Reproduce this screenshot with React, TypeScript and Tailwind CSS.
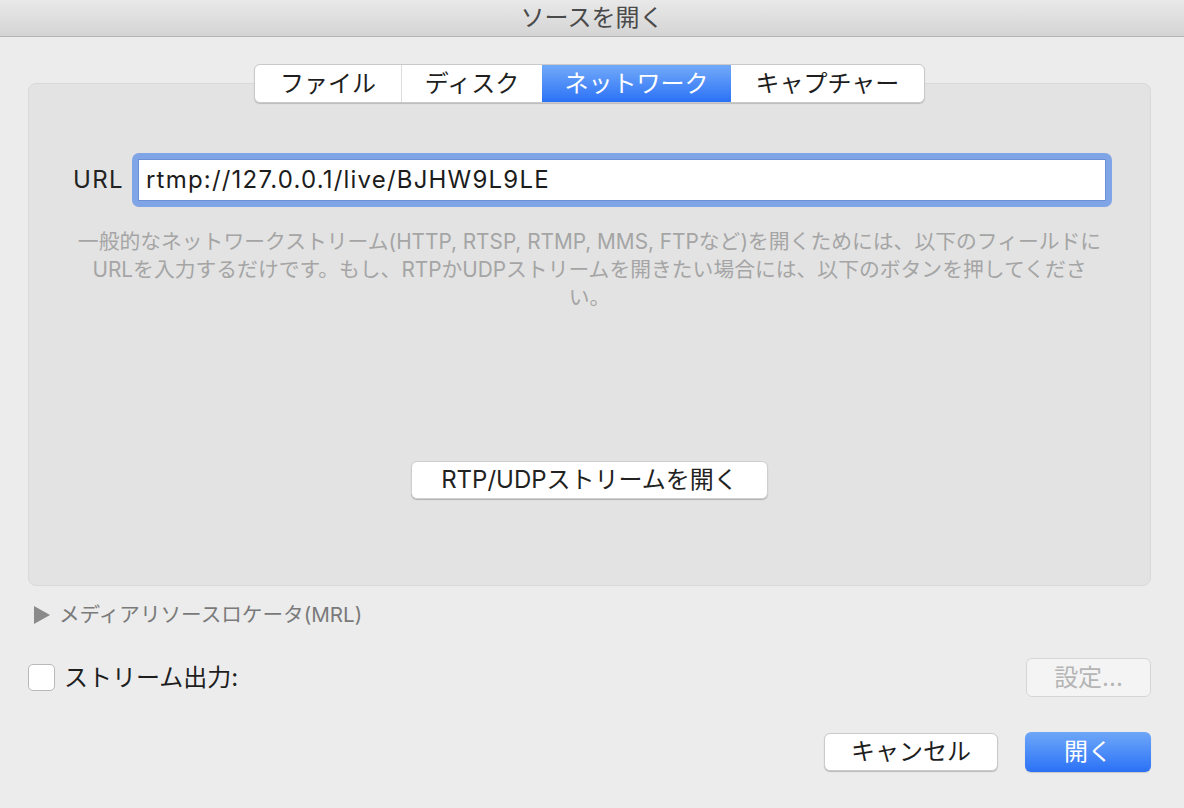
import React from "react";

const FONT = { fontFamily: '"Inter", "Noto Sans CJK JP", sans-serif' };

function Segmented() {
  const items = ["ファイル", "ディスク", "ネットワーク", "キャプチャー"];
  const widths = ["w-[146px]", "w-[141px]", "w-[189px]", "w-[193px]"];
  return (
    <div className="relative z-10 flex h-[39px] rounded-[6px] border border-[#c9c9c9] bg-white shadow-[0_1px_1px_rgba(0,0,0,0.18)] overflow-hidden">
      {items.map((t, i) => {
        const sel = i === 2;
        return (
          <div
            key={t}
            className={
              "flex items-center justify-center text-[24px] leading-none " +
              widths[i] +
              (sel
                ? " bg-gradient-to-b from-[#72a9f8] to-[#2b71f6] text-white"
                : " text-[#1e1e1e]") +
              (i === 1 ? " border-l border-[#dcdcdc]" : "")
            }
          >
            {t}
          </div>
        );
      })}
    </div>
  );
}

export default function App() {
  return (
    <div
      className="w-[1184px] h-[808px] bg-[#ececec] flex flex-col overflow-hidden"
      style={FONT}
    >
      {/* title bar */}
      <div className="h-[37px] shrink-0 bg-gradient-to-b from-[#e9e9e9] to-[#d4d4d4] border-b border-[#b4b4b4] flex items-center justify-center">
        <span className="text-[24px] leading-none text-[#4a4a4a]">ソースを開く</span>
      </div>

      <div className="pl-[28px] pr-[33px] flex flex-col">
        {/* tabs */}
        <div className="pt-[27px] flex justify-center">
          <Segmented />
        </div>

        {/* panel */}
        <div className="-mt-[20px] h-[503px] rounded-[8px] bg-[#e3e3e3] border border-[#d9d9d9] flex flex-col items-center">
          <div className="mt-[69px] w-full flex items-center pl-[44px]">
            <span className="text-[24px] leading-none tracking-[1.3px] text-[#222] w-[59px]">URL</span>
            <div className="w-[980px] h-[54px] rounded-[7px] bg-[#80a5e6] p-[6px]">
              <div className="h-full bg-white border border-[#6d8fd4] flex items-center pl-[7px]">
                <span className="text-[24px] leading-none tracking-[1.2px] text-[#1c1c1c]">
                  rtmp://127.0.0.1/live/BJHW9L9LE
                </span>
              </div>
            </div>
          </div>

          <p className="mt-[21px] text-center text-[20.8px] leading-[28px] text-[#a5a5a5]">
            一般的なネットワークストリーム(HTTP, RTSP, RTMP, MMS, FTPなど)を開くためには、以下のフィールドに
            <br />
            URLを入力するだけです。もし、RTPかUDPストリームを開きたい場合には、以下のボタンを押してくださ
            <br />
            い。
          </p>

          <button className="mt-[149px] w-[357px] h-[38px] rounded-[6px] bg-white border border-[#cfcfcf] shadow-[0_1px_1px_rgba(0,0,0,0.22)] text-[24px] leading-none text-[#222] flex items-center justify-center">
            RTP/UDPストリームを開く
          </button>
        </div>

        {/* MRL */}
        <div className="mt-[20px] flex items-center h-[18px] pl-[6px]">
          <svg width="16" height="18" viewBox="0 0 16 18">
            <path d="M0 0 L16 9 L0 18 Z" fill="#8a8a8a" />
          </svg>
          <span className="ml-[9px] text-[20.6px] leading-none text-[#7a7a7a]">
            メディアリソースロケータ(MRL)
          </span>
        </div>

        {/* stream output */}
        <div className="mt-[34px] flex items-center justify-between h-[39px]">
          <div className="flex items-center">
            <div className="w-[27px] h-[27px] rounded-[5px] bg-white border border-[#b9b9b9]" />
            <span className="ml-[9px] text-[24px] leading-none text-[#1e1e1e]">ストリーム出力:</span>
          </div>
          <button className="w-[125px] h-[39px] rounded-[6px] bg-[#f4f4f4] border border-[#d6d6d6] text-[24px] leading-none text-[#b5b5b5] flex items-center justify-center">
            設定...
          </button>
        </div>

        {/* bottom buttons */}
        <div className="mt-[35px] flex justify-end items-center gap-[27px]">
          <button className="w-[174px] h-[38px] rounded-[6px] bg-white border border-[#cacaca] shadow-[0_1px_1px_rgba(0,0,0,0.22)] text-[24px] leading-none text-[#1e1e1e] flex items-center justify-center">
            キャンセル
          </button>
          <button className="w-[126px] h-[40px] rounded-[6px] bg-gradient-to-b from-[#6ea7f8] to-[#2a70f6] text-[24px] leading-none text-white flex items-center justify-center shadow-[0_1px_1px_rgba(0,0,0,0.15)]">
            開く
          </button>
        </div>
      </div>
    </div>
  );
}
